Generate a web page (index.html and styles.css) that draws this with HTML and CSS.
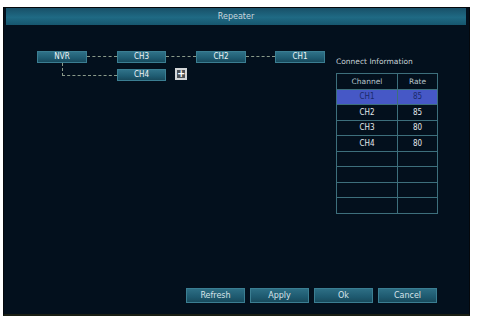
FILE: index.html
```html
<!DOCTYPE html>
<html lang="en">
<head>
  <meta charset="UTF-8" />
  <title>Repeater</title>
  <link rel="stylesheet" href="styles.css">
</head>
<body>
<div class="window">
  <div class="title-bar">Repeater</div>

  <div class="content">
    <div class="main">
      <!-- 연결 구조도 -->
      <div class="diagram">
        <div class="node">NVR</div>
        <div class="link"></div>
        <div class="node">CH3</div>
        <div class="link"></div>
        <div class="node">CH2</div>
        <div class="link"></div>
        <div class="node">CH1</div>

        <div class="branch"></div>
        <div class="node node-ch4">CH4</div>
        <div class="add-btn">+</div>
      </div>

      <!-- 연결 정보 -->
      <div class="info">
        <div class="info-title">Connect Information</div>
        <table class="info-table">
          <tr><th>Channel</th><th>Rate</th></tr>
          <tr class="selected"><td>CH1</td><td>85</td></tr>
          <tr><td>CH2</td><td>85</td></tr>
          <tr><td>CH3</td><td>80</td></tr>
          <tr><td>CH4</td><td>80</td></tr>
          <tr><td></td><td></td></tr>
          <tr><td></td><td></td></tr>
          <tr><td></td><td></td></tr>
          <tr><td></td><td></td></tr>
        </table>
      </div>
    </div>

    <div class="button-group">
      <button>Refresh</button>
      <button>Apply</button>
      <button>Ok</button>
      <button>Cancel</button>
    </div>
  </div>
</div>
</body>
</html>
```

FILE: styles.css
```css
* { box-sizing: border-box; margin: 0; padding: 0; }
body {
  background: #fff;
  font-family: 'DejaVu Sans', Verdana, sans-serif;
}
.window {
  margin: 7px 0 0 3px;
  width: 467px;
  height: 309px;
  background: #03101d;
  border: 1px solid #05080c;
  border-bottom: 2px solid #1a1f14;
  padding: 0 3px 0 2px;
  display: flex;
  flex-direction: column;
}
.title-bar {
  height: 17px;
  background: linear-gradient(to bottom, #185068, #1f6a84 55%, #16566e);
  color: #c9d6de;
  font-size: 8px;
  text-align: center;
  line-height: 17px;
}
.content {
  flex: 1;
  display: flex;
  flex-direction: column;
}
.main {
  display: flex;
}
.diagram {
  display: grid;
  grid-template-columns: 50px 30px 49px 30px 50px 29px 50px;
  grid-template-rows: 12px 12px;
  row-gap: 6px;
  margin: 26px 0 0 31px;
  align-self: flex-start;
}
.node {
  background: linear-gradient(to bottom, #2f7188, #1f5c72 60%, #184a5c);
  border: 1px solid #3b7e92;
  color: #eef4f6;
  font-family: 'DejaVu Sans Condensed', 'DejaVu Sans', sans-serif;
  font-stretch: condensed;
  font-size: 8px;
  line-height: 10px;
  text-align: center;
}
.link {
  height: 6px;
  border-bottom: 1px dashed #8a9a8a;
}
.branch {
  grid-column: 1 / 3;
  grid-row: 2;
  margin: -6px 0 0 25px;
  height: 13px;
  border-left: 1px dashed #8a9a8a;
  border-bottom: 1px dashed #8a9a8a;
}
.node-ch4 {
  grid-column: 3;
  grid-row: 2;
}
.add-btn {
  grid-column: 4;
  grid-row: 2;
  margin: -1px 0 0 9px;
  width: 12px;
  height: 12px;
  border: 2px solid #d2d6d8;
  background: #4a5056;
  color: #fff;
  font-size: 10px;
  font-weight: bold;
  line-height: 8px;
  text-align: center;
}
.info {
  margin: 32px 0 0 11px;
}
.info-title {
  color: #c6d0d6;
  font-size: 7.5px;
  height: 16px;
}
.info-table {
  border-collapse: collapse;
  width: 102px;
}
.info-table th,
.info-table td {
  border: 1px solid #3d6f7c;
  height: 15.5px;
  font-size: 8px;
  font-weight: normal;
  text-align: center;
  color: #e4eaee;
}
.info-table th {
  color: #b8c4cc;
  font-size: 7.5px;
}
.info-table td:first-child,
.info-table th:first-child {
  width: 61px;
}
.info-table td {
  font-family: 'DejaVu Sans Condensed', 'DejaVu Sans', sans-serif;
  font-stretch: condensed;
}
.info-table tr.selected td {
  background: #4658c6;
  color: #1a2a6a;
}
.button-group {
  margin-top: auto;
  margin-bottom: 11px;
  display: flex;
  justify-content: flex-end;
  gap: 5px;
  padding-right: 29px;
}
.button-group button {
  width: 59px;
  height: 15px;
  background: linear-gradient(to bottom, #2d6e84, #1e5a70 60%, #184a5c);
  border: 1px solid #3b7e92;
  color: #d8e4ea;
  font-family: 'DejaVu Sans', sans-serif;
  font-size: 8px;
}
```
